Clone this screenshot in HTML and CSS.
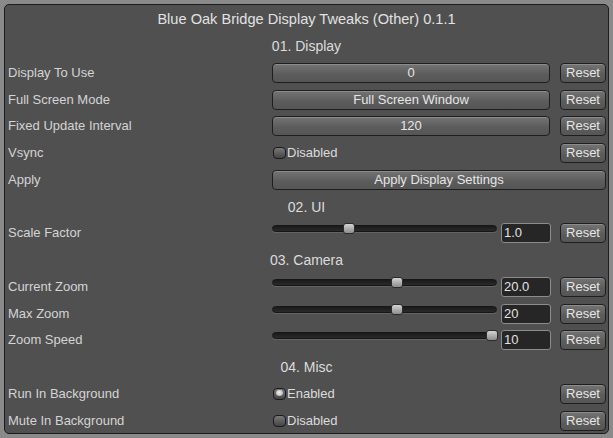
FILE: index.html
```html
<!DOCTYPE html>
<html>
<head>
<meta charset="utf-8">
<link rel="stylesheet" href="styles.css">
</head>
<body>
<div class="window">
  <div class="title">Blue Oak Bridge Display Tweaks (Other) 0.1.1</div>
  <div class="rows">
    <div class="header">01. Display</div>
    <div class="row">
      <span class="label">Display To Use</span>
      <div class="btn">0</div>
      <div class="btn reset">Reset</div>
    </div>
    <div class="row">
      <span class="label">Full Screen Mode</span>
      <div class="btn">Full Screen Window</div>
      <div class="btn reset">Reset</div>
    </div>
    <div class="row">
      <span class="label">Fixed Update Interval</span>
      <div class="btn">120</div>
      <div class="btn reset">Reset</div>
    </div>
    <div class="row">
      <span class="label">Vsync</span>
      <div class="toggle"><span class="check"></span>Disabled</div>
      <div class="btn reset">Reset</div>
    </div>
    <div class="row">
      <span class="label">Apply</span>
      <div class="btn span">Apply Display Settings</div>
    </div>

    <div class="header">02. UI</div>
    <div class="row">
      <span class="label">Scale Factor</span>
      <div class="slider-ctrl">
        <div class="slider"><div class="track"></div><div class="thumb" style="left: 71px"></div></div>
        <div class="field">1.0</div>
      </div>
      <div class="btn reset">Reset</div>
    </div>

    <div class="header">03. Camera</div>
    <div class="row">
      <span class="label">Current Zoom</span>
      <div class="slider-ctrl">
        <div class="slider"><div class="track"></div><div class="thumb" style="left: 119px"></div></div>
        <div class="field">20.0</div>
      </div>
      <div class="btn reset">Reset</div>
    </div>
    <div class="row">
      <span class="label">Max Zoom</span>
      <div class="slider-ctrl">
        <div class="slider"><div class="track"></div><div class="thumb" style="left: 119px"></div></div>
        <div class="field">20</div>
      </div>
      <div class="btn reset">Reset</div>
    </div>
    <div class="row">
      <span class="label">Zoom Speed</span>
      <div class="slider-ctrl">
        <div class="slider"><div class="track"></div><div class="thumb" style="left: 214px"></div></div>
        <div class="field">10</div>
      </div>
      <div class="btn reset">Reset</div>
    </div>

    <div class="header">04. Misc</div>
    <div class="row">
      <span class="label">Run In Background</span>
      <div class="toggle"><span class="check on"></span>Enabled</div>
      <div class="btn reset">Reset</div>
    </div>
    <div class="row">
      <span class="label">Mute In Background</span>
      <div class="toggle"><span class="check"></span>Disabled</div>
      <div class="btn reset">Reset</div>
    </div>
  </div>
</div>
</body>
</html>
```

FILE: styles.css
```css
html, body {
  margin: 0;
  padding: 0;
  background: #8a8a8a;
}

body {
  width: 613px;
  height: 438px;
  overflow: hidden;
  font-family: "Liberation Sans", Arial, sans-serif;
  color: #d6d6d6;
}

.window {
  margin: 4px;
  width: 605px;
  height: 430px;
  box-sizing: border-box;
  border: 1px solid #1c1c1c;
  border-radius: 5px;
  background: #505050;
  padding: 4px 2px 0 3px;
}

.title {
  height: 20px;
  line-height: 20px;
  text-align: center;
  font-size: 14.6px;
  color: #e2e2e2;
  margin-left: -3px;
  margin-right: -2px;
}

.rows {
  margin-top: 7px;
  display: flex;
  flex-direction: column;
  gap: 6.75px;
}

.header {
  height: 20px;
  line-height: 20px;
  text-align: center;
  font-size: 14px;
  color: #dcdcdc;
  margin-left: -3px;
  margin-right: -2px;
}

.row {
  display: grid;
  grid-template-columns: 255px 279px 46px;
  column-gap: 9px;
  height: 20px;
  align-items: center;
}

.label {
  font-size: 13px;
  line-height: 20px;
  color: #d4d4d4;
  white-space: nowrap;
}

.btn {
  box-sizing: border-box;
  height: 20px;
  line-height: 18px;
  border: 1px solid #1e1e1e;
  border-radius: 4px;
  background: linear-gradient(#747474, #5b5b5b 60%, #565656);
  box-shadow: inset 0 1px 0 #8c8c8c;
  color: #e6e6e6;
  font-size: 13px;
  text-align: center;
  white-space: nowrap;
  margin-right: 1px;
}

.btn.reset {
  margin-right: 0;
}

.btn.span {
  grid-column: 2 / 4;
  margin-right: 0;
}

.toggle {
  display: flex;
  align-items: center;
  font-size: 13px;
  line-height: 20px;
  color: #dcdcdc;
}

.check {
  position: relative;
  display: inline-block;
  box-sizing: border-box;
  width: 13px;
  height: 12px;
  margin-left: 1px;
  margin-right: 1px;
  border: 1px solid #1a1a1a;
  border-radius: 4px;
  background: linear-gradient(#7a7a7a, #5e5e5e 50%, #454545);
}

.check.on::after {
  content: "";
  position: absolute;
  left: 2px;
  top: 1px;
  width: 7px;
  height: 6px;
  border-radius: 50%;
  background: radial-gradient(circle at 45% 40%, #f2f2f2, #c4c4c4 60%, #9a9a9a);
}

.slider-ctrl {
  display: flex;
  align-items: flex-start;
  gap: 4px;
  height: 20px;
}

.slider {
  position: relative;
  width: 225px;
  height: 20px;
}

.track {
  position: absolute;
  left: 0;
  right: 0;
  top: 2px;
  height: 7px;
  box-sizing: border-box;
  border: 1px solid #161616;
  border-radius: 4px;
  background: linear-gradient(#1a1a1a, #2a2a2a);
  box-shadow: 0 1px 0 #646464;
}

.thumb {
  position: absolute;
  top: 0;
  width: 12px;
  height: 11px;
  box-sizing: border-box;
  border: 1px solid #2c2c2c;
  border-radius: 3px;
  background: linear-gradient(#d4d4d4, #a8a8a8 60%, #8e8e8e);
}

.field {
  box-sizing: border-box;
  width: 50px;
  height: 20px;
  line-height: 18px;
  border: 1px solid #8c8c8c;
  border-radius: 3px;
  background: #262626;
  color: #e2e2e2;
  font-size: 13px;
  padding-left: 2px;
}
```
